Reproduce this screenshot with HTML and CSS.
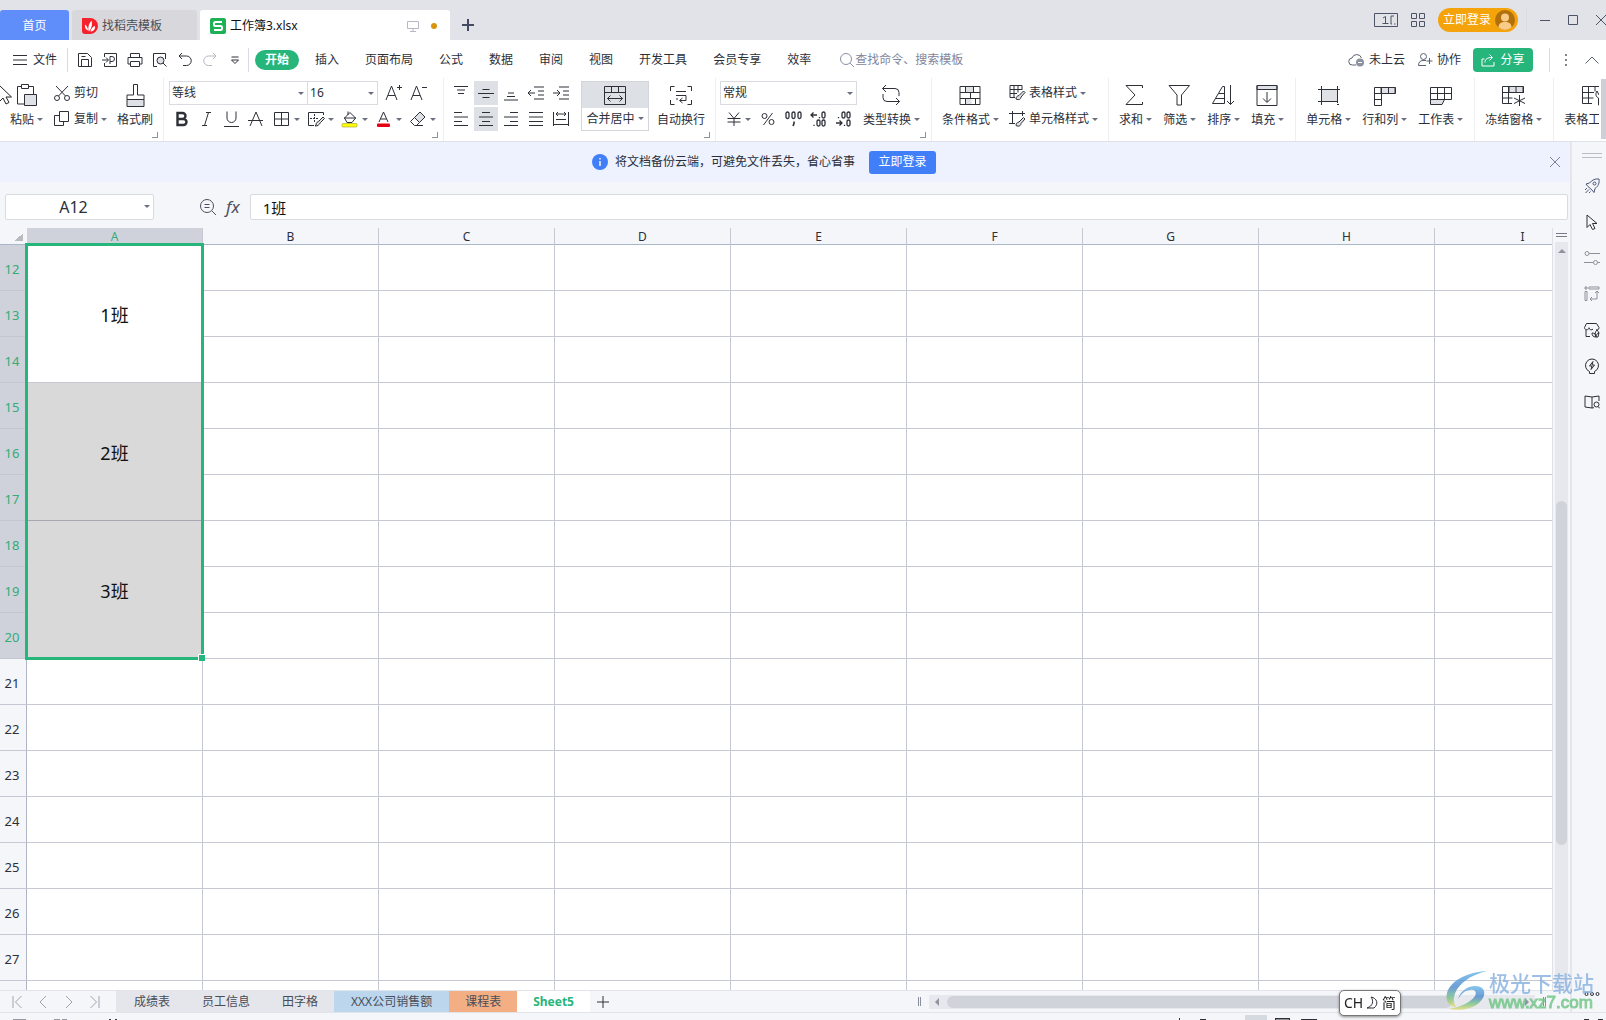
FILE: index.html
```html
<!DOCTYPE html>
<html lang="zh-CN">
<head>
<meta charset="utf-8">
<title>工作簿3.xlsx</title>
<link rel="stylesheet" href="styles.css">
</head>
<body>
<header class="titlebar">
  <button class="tab tab-home">首页</button>
  <button class="tab tab-template">
    <svg width="16" height="16" viewBox="0 0 16 16"><path d="M0 0h8a8 8 0 0 1 0 16H3a3 3 0 0 1-3-3z" fill="#f5222d"/><path d="M7 13.500C5.500 11 6.500 6 9.500 2.500c1 3.500.5 7.500-2.500 11zM6 12.500C3.500 11.500 2.500 9.500 3 6.500c2 1.500 3 3.500 3 6zM8.500 13.500c3 0 5-2.500 4.500-5.500-2.500 1-4 2.500-4.500 5.500z" fill="#fff"/></svg>
    找稻壳模板
  </button>
  <button class="tab tab-doc">
    <svg width="16" height="16" viewBox="0 0 16 16"><rect width="16" height="16" rx="2" fill="#1eb256"/><path d="M12 4H5.500Q4 4 4 5.500V6.500Q4 8 5.500 8h5Q12 8 12 9.500v1Q12 12 10.500 12H4" fill="none" stroke="#fff" stroke-width="2"/></svg>
    <span class="tab-name">工作簿3.xlsx</span>
    <svg class="ic pale" width="12" height="12" viewBox="0 0 12 12"><path d="M.5 1.500h11v7H.5zM6 8.500v3M3 11.500h6"/></svg>
    <i class="unsaved"></i>
  </button>
  <button class="new-tab" aria-label="新建标签"><svg class="ic" width="14" height="14" viewBox="0 0 14 14" stroke-width="2"><path d="M7 1v12M1 7h12"/></svg></button>
  <div class="window-tools">
    <button aria-label="窗口排列"><svg class="ic" width="24" height="14" viewBox="0 0 24 14"><path d="M.5.500h23v13H.5z"/><path d="M9 5l2.500-1.500v7M8.500 10.500h6M20 3h-3v8h1M20 11h1.500"/></svg></button>
    <button aria-label="应用"><svg class="ic" width="14" height="14" viewBox="0 0 14 14"><path d="M.5.500h5v5h-5zM8.500.500h5v5h-5zM.5 8.500h5v5h-5zM8.500 8.500h5v5h-5z"/></svg></button>
    <button class="login-pill">立即登录
      <svg width="20" height="20" viewBox="0 0 20 20"><circle cx="10" cy="10" r="10" fill="#b2700a"/><circle cx="10" cy="7.500" r="4" fill="#f8cb86"/><path d="M3.500 17.500C3.500 13.500 6 12 10 12s6.500 1.500 6.500 5.500A10 10 0 0 1 3.500 17.500z" fill="#f8cb86"/></svg>
    </button>
    <i class="rule"></i>
    <button aria-label="最小化"><svg class="ic" width="10" height="10" viewBox="0 0 10 10"><path d="M0 5.500h10"/></svg></button>
    <button aria-label="最大化"><svg class="ic" width="10" height="10" viewBox="0 0 10 10"><path d="M.5.500h9v9h-9z"/></svg></button>
    <button aria-label="关闭"><svg class="ic" width="10" height="10" viewBox="0 0 10 10"><path d="M0 0l10 10M10 0L0 10"/></svg></button>
  </div>
</header>

<nav class="menubar">
  <button class="file"><svg class="ic" width="14" height="10" viewBox="0 0 14 10"><path d="M0 .5h14M0 5h14M0 9.500h14"/></svg>文件</button>
  <i class="rule"></i>
  <div class="quick">
    <button aria-label="保存"><svg class="ic" width="16" height="16" viewBox="0 0 16 16"><path d="M1.500 1.500h9l4 4v9h-13zM4.500 14v-6.500h7V14M4.500 4.500h4"/></svg></button>
    <button aria-label="输出为PDF"><svg class="ic" width="16" height="16" viewBox="0 0 16 16"><path d="M2.500 5V1.500h12v13h-12V11M0 8h6M4 5.500L6.500 8 4 10.500M8 12V4.500h2a2 2 0 0 1 0 5H8"/></svg></button>
    <button aria-label="打印"><svg class="ic" width="16" height="16" viewBox="0 0 16 16"><path d="M3.500 5V1.500h9V5M3.500 12h-2.500V5.500h14V12h-2.500M3.500 9.500h9v5h-9z"/></svg></button>
    <button aria-label="打印预览"><svg class="ic" width="16" height="16" viewBox="0 0 16 16"><path d="M5 14.500H1.500v-13h12V7"/><circle cx="8.500" cy="8.500" r="3.500" fill="#dfe1e6"/><path d="M11 11l3.500 3.500"/></svg></button>
    <button aria-label="撤销"><svg class="ic" width="16" height="16" viewBox="0 0 16 16"><path d="M5 1L2 4l3 3M2 4h7.500a4.500 4.500 0 0 1 0 9.500H6"/></svg></button>
    <button aria-label="恢复"><svg class="ic pale" width="16" height="16" viewBox="0 0 16 16"><path d="M11 1l3 3-3 3M14 4H6.500a4.500 4.500 0 0 0 0 9.500H10"/></svg></button>
    <button aria-label="更多"><svg class="ic" width="16" height="16" viewBox="0 0 16 16"><path d="M4.500 5h7M4.500 8h7L8 11.500z"/></svg></button>
  </div>
  <i class="rule"></i>
  <div class="menus">
    <button class="current">开始</button><button>插入</button><button>页面布局</button><button>公式</button><button>数据</button><button>审阅</button><button>视图</button><button>开发工具</button><button>会员专享</button><button>效率</button>
  </div>
  <label class="search"><svg class="ic" width="16" height="16" viewBox="0 0 16 16"><circle cx="7" cy="7" r="5.500"/><path d="M11 11l4 4"/></svg><input type="text" placeholder="查找命令、搜索模板"></label>
  <div class="menu-right">
    <button><svg class="ic" width="17" height="16" viewBox="0 0 17 16"><path d="M8 13H4.500a3.500 3.500 0 0 1-.5-7A5 5 0 0 1 13.500 6"/><circle cx="12" cy="10.500" r="4" fill="#8d92a0" stroke="none"/><path d="M10 10.500h4" stroke="#fff"/></svg>未上云</button>
    <button><svg class="ic" width="16" height="16" viewBox="0 0 16 16"><circle cx="6.500" cy="4.500" r="3"/><path d="M9 13.500H1.500C1.500 10 3.500 8.500 6 8.500h3M12.500 6v6M9.500 9h6"/></svg>协作</button>
    <button class="share"><svg class="ic" width="15" height="14" viewBox="0 0 15 14"><path d="M3.500 6H1v7h12V9M4 9.500C4 6 6.500 4.500 11 4.500M8.500 1.500l3 3-3 3"/></svg>分享</button>
    <i class="rule"></i>
    <button aria-label="更多选项"><svg width="4" height="14" viewBox="0 0 4 14" fill="#555b6b"><circle cx="2" cy="2" r="1"/><circle cx="2" cy="7" r="1"/><circle cx="2" cy="12" r="1"/></svg></button>
    <button class="fold" aria-label="折叠功能区"><svg class="ic" width="14" height="8" viewBox="0 0 14 8"><path d="M.5 7.500L7 1l6.500 6.500"/></svg></button>
  </div>
</nav>

<section class="ribbon">
  <div class="group corner">
    <button class="big"><span class="pic"><svg class="ic" width="24" height="24" viewBox="0 0 24 24"><path d="M9 21H2.500V3.500H6M14 3.500h4.500V11M6.500 1.500h7v4h-7z"/><path d="M9.500 11.500h12v11h-12z" fill="#dfe1e6"/></svg></span><span>粘贴<i class="caret"></i></span></button>
    <div class="rows">
      <button class="small"><svg class="ic" width="18" height="18" viewBox="0 0 18 18"><circle cx="4" cy="14" r="2.500"/><circle cx="14" cy="14" r="2.500"/><path d="M3 2l9.500 10M15 2L5.500 12"/></svg>剪切</button>
      <button class="small"><svg class="ic" width="18" height="18" viewBox="0 0 18 18"><path d="M6.500 1.500h9v10h-9zM6.500 5.500h-5v10h9v-4"/></svg>复制<i class="caret"></i></button>
    </div>
    <button class="big"><span class="pic"><svg class="ic" width="24" height="24" viewBox="0 0 24 24"><path d="M10.500 1.500h4V12h6.500v4.500H4V12h6.500z"/><path d="M4 16.500h17v7H4z" fill="#dfe1e6"/></svg></span><span>格式刷</span></button>
  </div>

  <div class="group corner font">
    <div class="rows">
      <div class="row">
        <span class="pick pick-font"><select aria-label="字体"><option>等线</option></select></span>
        <span class="pick pick-size"><select aria-label="字号"><option>16</option></select></span>
        <button class="tool" aria-label="增大字号"><svg class="ic" width="18" height="18" viewBox="0 0 18 18"><path d="M1 16L6.500 2 12 16M3 11.500h7M14.500 1v5M12 3.500h5"/></svg></button>
        <button class="tool" aria-label="减小字号"><svg class="ic" width="18" height="18" viewBox="0 0 18 18"><path d="M1 16L6.500 2 12 16M3 11.500h7M12 3.500h5"/></svg></button>
      </div>
      <div class="row">
        <button class="tool" aria-label="加粗"><svg class="ic" width="18" height="18" viewBox="0 0 18 18" stroke-width="2.400"><path d="M4.500 3h5a3 3 0 0 1 0 6h-5zM4.500 9h6a3 3 0 0 1 0 6h-6z"/></svg></button>
        <button class="tool" aria-label="倾斜"><svg class="ic" width="18" height="18" viewBox="0 0 18 18"><path d="M8 2.500h5M4 15.500h5M10.500 2.500l-4 13"/></svg></button>
        <button class="tool" aria-label="下划线"><svg class="ic" width="18" height="18" viewBox="0 0 18 18"><path d="M4 1.500V8a4.500 4.500 0 0 0 9 0V1.500M1 16.500h15"/></svg></button>
        <button class="tool" aria-label="删除线"><svg class="ic" width="18" height="18" viewBox="0 0 18 18"><path d="M2 16L8 2l6 14M0 10.500h15"/></svg></button>
        <button class="tool drop" aria-label="边框"><svg class="ic" width="18" height="18" viewBox="0 0 18 18"><path d="M1.500 2.500h14v13h-14zM8.500 2.500v13M1.500 9h14"/></svg><i class="caret"></i></button>
        <button class="tool drop" aria-label="绘图边框"><svg class="ic" width="18" height="18" viewBox="0 0 18 18"><path d="M7 15.500H1.500v-13h15V5"/><path d="M7.500 4v8M3 8.500h8" stroke-dasharray="2 1"/><path d="M9 15c0-3 2-3 3-4l4-4 1.500 1.500-4 4C12 15 11 16 8 16z" fill="#dfe1e6"/></svg><i class="caret"></i></button>
        <button class="tool drop" aria-label="填充颜色"><svg class="ic" width="18" height="18" viewBox="0 0 18 18"><path d="M3.500 8L9 2.500 14.500 8 11 12.500H6zM3 8h12M7 5V1.500"/><rect x="1" y="13.500" width="15" height="3.500" rx="1" fill="#ffff00" stroke="#a39b32" stroke-width=".6"/></svg><i class="caret"></i></button>
        <button class="tool drop" aria-label="字体颜色"><svg class="ic" width="18" height="18" viewBox="0 0 18 18"><path d="M4 12L8.500 2l4.500 10M5.500 9h6"/><rect x="2" y="13.500" width="13" height="3.500" rx="1" fill="#e60012" stroke="none"/></svg><i class="caret"></i></button>
        <button class="tool drop" aria-label="清除"><svg class="ic" width="18" height="18" viewBox="0 0 18 18"><path d="M5.500 7.500L11 2l5 5-5.500 5.500z" fill="#dfe1e6"/><path d="M5.500 7.500L1.500 11.500 5.500 15.500h2l3-3M7 15.500h7"/></svg><i class="caret"></i></button>
      </div>
    </div>
  </div>

  <div class="group corner align">
    <div class="rows">
      <div class="row">
        <button class="tool" aria-label="顶端对齐"><svg class="ic" width="16" height="16" viewBox="0 0 16 16"><path d="M1 1.500h14M4 5h8M5 8.500h6"/></svg></button>
        <button class="tool on" aria-label="垂直居中"><svg class="ic" width="16" height="16" viewBox="0 0 16 16"><path d="M4.500 4.500h7M0 8.500h16M4.500 12.500h7"/></svg></button>
        <button class="tool" aria-label="底端对齐"><svg class="ic" width="16" height="16" viewBox="0 0 16 16"><path d="M5 8h6M4 11.500h8M1 15h14"/></svg></button>
        <button class="tool" aria-label="减少缩进"><svg class="ic" width="16" height="16" viewBox="0 0 16 16"><path d="M6 2h10M10 6h6M10 10h6M6 14h10M0 8h7M3 5L0 8l3 3"/></svg></button>
        <button class="tool" aria-label="增加缩进"><svg class="ic" width="16" height="16" viewBox="0 0 16 16"><path d="M6 2h10M10 6h6M10 10h6M6 14h10M0 8h7M4 5l3 3-3 3"/></svg></button>
      </div>
      <div class="row">
        <button class="tool" aria-label="左对齐"><svg class="ic" width="16" height="16" viewBox="0 0 16 16"><path d="M1 1.500h8M1 6h14M1 10.500h8M1 14.500h14"/></svg></button>
        <button class="tool on" aria-label="水平居中"><svg class="ic" width="16" height="16" viewBox="0 0 16 16"><path d="M4 1.500h8M1 6h14M4 10.500h8M1 14.500h14"/></svg></button>
        <button class="tool" aria-label="右对齐"><svg class="ic" width="16" height="16" viewBox="0 0 16 16"><path d="M7 1.500h8M1 6h14M7 10.500h8M1 14.500h14"/></svg></button>
        <button class="tool" aria-label="两端对齐"><svg class="ic" width="16" height="16" viewBox="0 0 16 16"><path d="M1 1.500h14M1 6h14M1 10.500h14M1 14.500h14"/></svg></button>
        <button class="tool" aria-label="分散对齐"><svg class="ic" width="16" height="16" viewBox="0 0 16 16"><path d="M.5 1v14M15.500 1v14M3 3h10M5 1L3 3l2 2M11 1l2 2-2 2M3 8.500h10M.5 13.500h15"/></svg></button>
      </div>
    </div>
    <button class="big merge"><span class="pic"><svg class="ic" width="24" height="24" viewBox="0 0 24 24"><path d="M1.500 3.500h21v18h-21zM1.500 9.500h21M8.500 3.500v6M15.500 3.500v6M4.500 15.500h15M7.500 12.500l-3 3 3 3M16.500 12.500l3 3-3 3"/></svg></span><span>合并居中<i class="caret"></i></span></button>
    <button class="big"><span class="pic"><svg class="ic" width="24" height="24" viewBox="0 0 24 24"><path d="M1.500 8V3.500h4M18.500 3.500h4V8M1.500 17v4.500h4M18.500 21.500h4V17M7 8.500h10M7 12.500h10v5h-6M13.500 15l-3 2.500 3 2.500M7 16h2"/></svg></span><span>自动换行</span></button>
  </div>

  <div class="group corner number">
    <div class="rows">
      <span class="pick pick-format"><select aria-label="数字格式"><option>常规</option></select></span>
      <div class="row">
        <button class="tool money" aria-label="货币"><svg class="ic" width="16" height="16" viewBox="0 0 16 16"><path d="M3 1.500l5 6 5-6M8 7.500V15M1.500 7.500h13M1.500 11h13"/></svg><i class="caret"></i></button>
        <button class="tool" aria-label="百分比"><svg class="ic" width="16" height="16" viewBox="0 0 16 16"><circle cx="3.500" cy="5" r="2.500"/><circle cx="10.500" cy="11" r="2.500"/><path d="M11.500 2l-9 12"/></svg></button>
        <button class="tool" aria-label="千位分隔"><svg class="ic" width="18" height="16" viewBox="0 0 18 16" ><g stroke-width="1.300"><rect x="1" y="1" width="3" height="6.500" rx="1.500"/><rect x="7" y="1" width="3" height="6.500" rx="1.500"/><rect x="13" y="1" width="3" height="6.500" rx="1.500"/><path d="M9 10.500v2l-1 2.500" stroke-width="1.600"/></g></svg></button>
        <button class="tool" aria-label="增加小数位"><svg class="ic" width="18" height="16" viewBox="0 0 18 16"><g stroke-width="1.300"><path d="M1 4h6M3.500 1.500L1 4l2.500 2.500M9.500 6v1.300M4 13.700V15"/><rect x="12" y="1" width="3" height="6" rx="1.500"/><rect x="7" y="9" width="3" height="6" rx="1.500"/><rect x="12" y="9" width="3" height="6" rx="1.500"/></g></svg></button>
        <button class="tool" aria-label="减少小数位"><svg class="ic" width="18" height="16" viewBox="0 0 18 16"><g stroke-width="1.300"><path d="M1 12h6M4.500 9.500L7 12l-2.500 2.500M9.500 13.700V15M3.500 6v1.300"/><rect x="7" y="1" width="3" height="6" rx="1.500"/><rect x="12" y="1" width="3" height="6" rx="1.500"/><rect x="12" y="9" width="3" height="6" rx="1.500"/></g></svg></button>
      </div>
    </div>
    <button class="big"><span class="pic"><svg class="ic" width="24" height="24" viewBox="0 0 24 24"><path d="M6 2L2.500 5.500 6 9M2.500 5.500H15a4 4 0 0 1 4 4V13M16 15l3.500 3.500L16 22M19.500 18.500H7a4 4 0 0 1-4-4V11"/></svg></span><span>类型转换<i class="caret"></i></span></button>
  </div>

  <div class="group styles">
    <button class="big"><span class="pic"><svg class="ic" width="24" height="24" viewBox="0 0 24 24"><path d="M6.500 3.500h8v6h-8zM6.500 15.500h6v6h-6z" fill="#dfe1e6" stroke="none"/><path d="M1 3.500h20v18H1zM1 9.500h20M1 15.500h20M6.500 3.500v6M14.500 3.500v6M11.500 9.500v6M6.500 15.500v6M16.500 15.500v6"/></svg></span><span>条件格式<i class="caret"></i></span></button>
    <div class="rows">
      <button class="small"><svg class="ic" width="18" height="18" viewBox="0 0 18 18"><path d="M7 13.500H2v-12h12V6M2 5.500h12M2 9.500h7M6 1.500v12M10 1.500v7"/><path d="M8 15c0-2 1-3 3-3.500L15.500 7 17 8.500 13 13c0 2-2 3.500-5 2z" fill="#dfe1e6"/></svg>表格样式<i class="caret"></i></button>
      <button class="small"><svg class="ic" width="18" height="18" viewBox="0 0 18 18"><path d="M4.500 1v13M1 3.500h16M14.500 1v5M1 13.500h6"/><path d="M8 15.500c0-2 1-3 3-3.500L15.500 7.500 17 9l-4 4.500c0 2-2 3.500-5 2z" fill="#dfe1e6"/></svg>单元格样式<i class="caret"></i></button>
    </div>
  </div>

  <div class="group">
    <button class="big"><span class="pic"><svg class="ic" width="24" height="24" viewBox="0 0 24 24"><path d="M18.500 5V2.500H2L11 12 2 21.500h16.500V19"/></svg></span><span>求和<i class="caret"></i></span></button>
    <button class="big"><span class="pic"><svg class="ic" width="24" height="24" viewBox="0 0 24 24"><path d="M1 2.500h20.500L13.500 12v10h-4.500V12z"/></svg></span><span>筛选<i class="caret"></i></span></button>
    <button class="big"><span class="pic"><svg class="ic" width="24" height="24" viewBox="0 0 24 24"><path d="M.5 20.500l10-17h2v17zM7 10.500h5.500M3.500 15.500h9M18.500 2v19.500M15 18l3.500 3.500L22 18"/></svg></span><span>排序<i class="caret"></i></span></button>
    <button class="big"><span class="pic"><svg class="ic" width="24" height="24" viewBox="0 0 24 24"><path d="M1 2.500h20v4H1z" fill="#dfe1e6"/><path d="M1 2.500h20v20H1zM11 9v10M7 15.500l4 4 4-4"/></svg></span><span>填充<i class="caret"></i></span></button>
  </div>

  <div class="group">
    <button class="big"><span class="pic"><svg class="ic" width="24" height="24" viewBox="0 0 24 24"><path d="M4.500 6.500h16v12h-16z" fill="#dfe1e6"/><path d="M4.500 3v19M20.500 3v17M1 6.500h22M1 18.500h18M20 21.500h2"/></svg></span><span>单元格<i class="caret"></i></span></button>
    <button class="big"><span class="pic"><svg class="ic" width="24" height="24" viewBox="0 0 24 24"><path d="M8 4.500h14v6H8z" fill="#dfe1e6"/><path d="M1.500 4.500h21v6h-14v12h-7zM8.500 4.500v6M15.500 4.500v6M1.500 10.500h7M1.500 16.500h7"/></svg></span><span>行和列<i class="caret"></i></span></button>
    <button class="big"><span class="pic"><svg class="ic" width="24" height="24" viewBox="0 0 24 24"><path d="M1.500 16.500h14l-2.500 5H1.500z" fill="#dfe1e6"/><path d="M1.500 4.500h21v12h-21zM1.500 10.500h21M8.500 4.500v12M15.500 4.500v12"/></svg></span><span>工作表<i class="caret"></i></span></button>
  </div>

  <div class="group">
    <button class="big"><span class="pic"><svg class="ic" width="24" height="24" viewBox="0 0 24 24"><path d="M7 3.500h14v6H7z" fill="#dfe1e6"/><path d="M10 20.500H.5v-17h21V10M.5 9.500h21M.5 15h10M6.500 3.500v17M14 3.500v6M17.500 12v11M12 15l11 5.500M23 15l-11 5.500"/></svg></span><span>冻结窗格<i class="caret"></i></span></button>
  </div>

  <div class="group last">
    <button class="big"><span class="pic"><svg class="ic" width="24" height="24" viewBox="0 0 24 24"><path d="M11 20.500H1.500v-17H21M1.500 9.500H13M1.500 15h11M7.500 3.500v17M14 3.500v5M16 8c-2 3-1 6 1.500 7v7h3v-7C23 14 24 11 22 8v4h-4z"/></svg></span><span>表格工具<i class="caret"></i></span></button>
  </div>
  <div class="ribbon-scroll"></div>
</section>

<div class="workspace">
  <main class="book">
    <div class="banner">
      <svg width="16" height="16" viewBox="0 0 16 16"><circle cx="8" cy="8" r="8" fill="#417ff9"/><path d="M8 7v5M8 4v1.500" stroke="#fff" stroke-width="1.400"/></svg>
      <span>将文档备份云端，可避免文件丢失，省心省事</span>
      <button class="login">立即登录</button>
      <button class="dismiss" aria-label="关闭"><svg class="ic" width="12" height="12" viewBox="0 0 12 12"><path d="M1 1l10 10M11 1L1 11"/></svg></button>
    </div>

    <div class="formula">
      <span class="pick namebox"><input type="text" aria-label="名称框" value="A12"></span>
      <div class="formula-tools">
        <button aria-label="查看公式"><svg class="ic" width="18" height="18" viewBox="0 0 18 18"><circle cx="8" cy="8" r="6.500"/><path d="M13 13l4 4M5.500 6.500h5M5.500 9.500h5"/></svg></button>
        <button class="fx" aria-label="插入函数">fx</button>
      </div>
      <input class="formula-input" type="text" aria-label="编辑栏" value="1班">
    </div>

    <div class="sheet-area">
      <div class="sheet">
        <table class="grid">
          <colgroup><col class="col-num"><col><col><col><col><col><col><col><col><col></colgroup>
          <thead><tr><th class="all"></th><th class="sel">A</th><th>B</th><th>C</th><th>D</th><th>E</th><th>F</th><th>G</th><th>H</th><th>I</th></tr></thead>
          <tbody>
            <tr><th class="sel">12</th><td rowspan="3">1班</td><td></td><td></td><td></td><td></td><td></td><td></td><td></td><td></td></tr>
            <tr><th class="sel">13</th><td></td><td></td><td></td><td></td><td></td><td></td><td></td><td></td></tr>
            <tr><th class="sel">14</th><td></td><td></td><td></td><td></td><td></td><td></td><td></td><td></td></tr>
            <tr><th class="sel">15</th><td rowspan="3" class="shade">2班</td><td></td><td></td><td></td><td></td><td></td><td></td><td></td><td></td></tr>
            <tr><th class="sel">16</th><td></td><td></td><td></td><td></td><td></td><td></td><td></td><td></td></tr>
            <tr><th class="sel">17</th><td></td><td></td><td></td><td></td><td></td><td></td><td></td><td></td></tr>
            <tr><th class="sel">18</th><td rowspan="3" class="shade">3班</td><td></td><td></td><td></td><td></td><td></td><td></td><td></td><td></td></tr>
            <tr><th class="sel">19</th><td></td><td></td><td></td><td></td><td></td><td></td><td></td><td></td></tr>
            <tr><th class="sel">20</th><td></td><td></td><td></td><td></td><td></td><td></td><td></td><td></td></tr>
            <tr><th>21</th><td></td><td></td><td></td><td></td><td></td><td></td><td></td><td></td><td></td></tr>
            <tr><th>22</th><td></td><td></td><td></td><td></td><td></td><td></td><td></td><td></td><td></td></tr>
            <tr><th>23</th><td></td><td></td><td></td><td></td><td></td><td></td><td></td><td></td><td></td></tr>
            <tr><th>24</th><td></td><td></td><td></td><td></td><td></td><td></td><td></td><td></td><td></td></tr>
            <tr><th>25</th><td></td><td></td><td></td><td></td><td></td><td></td><td></td><td></td><td></td></tr>
            <tr><th>26</th><td></td><td></td><td></td><td></td><td></td><td></td><td></td><td></td><td></td></tr>
            <tr><th>27</th><td></td><td></td><td></td><td></td><td></td><td></td><td></td><td></td><td></td></tr>
            <tr><th></th><td></td><td></td><td></td><td></td><td></td><td></td><td></td><td></td><td></td></tr>
          </tbody>
        </table>
        <div class="selection"></div>
      </div>
      <div class="vscroll">
        <i class="split"></i>
        <div class="vtrack"><i class="up"></i><i class="vthumb"></i></div>
      </div>
    </div>

    <div class="sheetbar">
      <div class="sheet-nav">
        <button aria-label="第一张"><svg class="ic" width="12" height="14" viewBox="0 0 12 14"><path d="M2 1v12M10.500 1l-6 6 6 6"/></svg></button>
        <button aria-label="上一张"><svg class="ic" width="12" height="14" viewBox="0 0 12 14"><path d="M9 1L3 7l6 6"/></svg></button>
        <button aria-label="下一张"><svg class="ic" width="12" height="14" viewBox="0 0 12 14"><path d="M3 1l6 6-6 6"/></svg></button>
        <button aria-label="最后一张"><svg class="ic" width="12" height="14" viewBox="0 0 12 14"><path d="M1.500 1l6 6-6 6M10 1v12"/></svg></button>
      </div>
      <div class="sheets">
        <button>成绩表</button><button>员工信息</button><button>田字格</button><button class="blue">XXX公司销售额</button><button class="orange">课程表</button><button class="active">Sheet5</button>
      </div>
      <button class="add-sheet" aria-label="新建工作表"><svg class="ic" width="14" height="14" viewBox="0 0 14 14"><path d="M7 1v12M1 7h12"/></svg></button>
      <div class="hscroll"><i class="grip"></i><div class="htrack"><i class="left"></i><i class="hthumb"></i><i class="right"></i></div><i class="grip"></i></div>
    </div>
  </main>

  <aside class="side">
    <i class="handle"></i>
    <button aria-label="快捷"><svg class="ic" width="16" height="16" viewBox="0 0 16 16" stroke="#4a5578"><path d="M15 1c-4-.5-7 1-9.500 4L2 6l2 2.500L8 12l2 2.500 1-4C14.500 8 15.500 5 15 1zM3 10l-2 2M5 11.500L1.500 15M6.500 13.500L5 15"/><circle cx="10.500" cy="5.500" r="1.500"/></svg></button>
    <button aria-label="选择"><svg class="ic" width="16" height="16" viewBox="0 0 16 16"><path d="M3 1v12.500l3-3 2.500 5 2.500-1-2.500-5h4.500z"/></svg></button>
    <button aria-label="属性"><svg class="ic gray" width="16" height="16" viewBox="0 0 16 16"><circle cx="3" cy="3.500" r="2"/><circle cx="11.500" cy="12.500" r="2"/><path d="M5 3.500h11M0 12.500h9.500M13.500 12.500H16"/></svg></button>
    <button aria-label="行列"><svg class="ic gray" width="16" height="16" viewBox="0 0 16 16"><path d="M1 1h2v2H1zM5 1h10v2H5zM1 5.500h2v9H1zM13 5v8H6M11 7l2-2 2 2M8 11l-2 2 2 2"/></svg></button>
    <button aria-label="备份"><svg class="ic" width="16" height="16" viewBox="0 0 16 16"><path d="M6 14.500H2V8M.5 5.500l2-4h10l2.500 4c0 2.500-2 3-3 2M.5 5.500c0 3 4.500 3 4.500 0M5 6c.5 2 3 2.500 4 1"/><path d="M8 11c3 0 4 1.500 4 4-3 0-4-1.500-4-4zM12 15c-1.500-3-1-5 1-7 2 2 2 4 1 7zM12 15c0-2 1-4 3.500-4"/></svg></button>
    <button aria-label="灵感"><svg class="ic" width="16" height="16" viewBox="0 0 16 16"><path d="M5.500 13.500a6.500 6.500 0 1 1 5 0M5.500 13.500v2h5v-2M9 3.500L5.500 8H8l-1 3.500L10.500 7H8z"/></svg></button>
    <button aria-label="查阅"><svg class="ic" width="16" height="16" viewBox="0 0 16 16"><path d="M8 3v11M8 3L1 2v11l7 1M8 3l7-1v5M8 14l2-.3"/><circle cx="12.500" cy="10.500" r="2.500"/><path d="M14 12.500l2 2"/></svg></button>
    <button class="more" aria-label="更多"><svg class="ic" width="16" height="6" viewBox="0 0 16 6"><circle cx="2.500" cy="3" r="1.500"/><circle cx="8" cy="3" r="1.500"/><circle cx="13.500" cy="3" r="1.500"/></svg></button>
  </aside>
</div>

<footer class="status">
  <svg width="120" height="8" viewBox="0 0 120 8" fill="#3b3f4a"><path d="M13 6.500h13V8H13zM54 6.500h6V8h-6zM62 6.500h5V8h-5zM109 6h2v2h-2zM115 6h2v2h-2z"/></svg>
  <svg width="430" height="8" viewBox="0 0 430 8" fill="#2e3038"><path d="M69 2h22v6H69z" fill="#d5d9e0"/><path d="M3 5h1v3H3zM24 6h6v2h-6zM99 5h15v3h-1V6.500h-13V8h-1zM125 6h16v2h-16zM408 6h5v2h-5zM422 6h5v2h-5z"/></svg>
</footer>

<svg class="pointer" width="14" height="22" viewBox="0 0 14 22"><path d="M-1 1v17l4-4 3 6 3-1.500-3-5.500h5.500z" fill="#fff" stroke="#222"/></svg>
<div class="ime">CH <svg class="ic" width="13" height="14" viewBox="0 0 13 14"><path d="M5 1c6 1 8 7 3 11H1C7 10 8 5 5 1z"/></svg> 简</div>
<div class="watermark">
  <svg width="42" height="40" viewBox="0 0 42 40">
    <defs><linearGradient id="wave" x1="0" y1="0" x2="0" y2="1"><stop offset="0" stop-color="#65b9e8"/><stop offset=".45" stop-color="#4b86cd"/><stop offset=".75" stop-color="#7cc486"/><stop offset="1" stop-color="#e8dc70"/></linearGradient></defs>
    <path d="M41 0C22 1 5 9 1 22c-2 8 2 13 9 14C5 29 9 17 19 10 25 5 33 2 41 0z" fill="url(#wave)"/>
    <path d="M12 28c2-7 9-13 17-13 9 0 11 6 8 12C32 36 18 41 3 38c12-2 22-7 26-13 2-4 0-7-5-6-5 0-9 4-12 9z" fill="url(#wave)"/>
  </svg>
  <div><b>极光下载站</b><span>www.xz7.com</span></div>
</div>
</body>
</html>
```
FILE: styles.css
```css
* { box-sizing: border-box; }

body {
  margin: 0;
  height: 100vh;
  display: flex;
  flex-direction: column;
  overflow: hidden;
  background: #f5f6f9;
  color: #2b2f3a;
  font: 12px/18px "Noto Sans", "Noto Sans CJK SC", sans-serif;
}

button, input, select {
  margin: 0;
  padding: 0;
  border: 0;
  background: none;
  color: inherit;
  font: inherit;
}

button {
  display: flex;
  flex: none;
  align-items: center;
  justify-content: center;
  white-space: nowrap;
}

svg { display: block; flex: none; }
.ic { fill: none; stroke: #2e3038; }
.ic[stroke] { stroke: #4a5578; }
.ic.pale { stroke: #b4b8c2; }
.ic.gray { stroke: #8d919b; }

.rule { width: 1px; height: 24px; background: #d9dbe0; flex: none; }

.caret {
  display: inline-block;
  flex: none;
  border: 3px solid transparent;
  border-top-color: #6b7080;
  border-bottom: 0;
  margin-left: 3px;
  vertical-align: 3px;
}

/* title bar */
.titlebar {
  height: 40px;
  flex: none;
  display: flex;
  align-items: flex-end;
  gap: 3px;
  background: #e2e3e8;
}
.tab { height: 30px; padding-top: 2px; border-radius: 3px 3px 0 0; }
.tab-home { width: 69px; background: #5f8dfa; color: #fff; }
.tab-template { width: 125px; justify-content: flex-start; gap: 4px; padding-left: 10px; background: #d8d8dc; color: #4a4e58; }
.tab-doc { width: 250px; justify-content: flex-start; gap: 4px; padding-left: 10px; padding-right: 13px; background: #fff; color: #111; }
.tab-name { flex: 1; text-align: left; }
.unsaved { width: 6px; height: 6px; margin-left: 8px; border-radius: 50%; background: #d8950c; }
.new-tab { width: 30px; height: 30px; }
.new-tab .ic { stroke: #434b62; }
.window-tools { display: flex; align-items: center; gap: 13px; height: 40px; margin-left: auto; }
.window-tools .ic { stroke: #4d5468; }
.window-tools .rule { margin-left: -5px; }
.window-tools button:nth-last-child(-n+2) { margin-left: 5px; }
.login-pill { width: 80px; height: 24px; gap: 4px; padding-left: 2px; border-radius: 12px; background: #f5a30b; color: #fff; }

/* menu row */
.menubar { height: 38px; flex: none; display: flex; align-items: center; padding: 2px 7px 0 13px; background: #fff; }
.file { gap: 6px; padding-right: 10px; }
.quick { display: flex; gap: 9px; padding: 0 5px 0 9px; }
.menus { display: flex; gap: 26px; padding-left: 6px; }
.menus .current { width: 44px; height: 20px; margin-right: -10px; border-radius: 10px; background: #26b57b; color: #fff; font-weight: 700; }
.search { display: flex; align-items: center; flex: 1; padding-left: 28px; }
.search .ic { stroke: #8a90a8; }
.search input { width: 120px; outline: 0; }
.search input::placeholder { color: #7f869c; opacity: 1; }
.menu-right { display: flex; align-items: center; gap: 12px; }
.menu-right button { gap: 4px; }
.menu-right .ic { stroke: #5b6172; }
.menu-right .share { width: 60px; height: 24px; border-radius: 4px; background: #26b57b; color: #fff; }
.menu-right .share .ic { stroke: #fff; }
.menu-right .rule { margin: 0 2px 0 4px; }
.menu-right .fold { margin-left: 5px; }

/* ribbon */
.ribbon {
  height: 64px;
  flex: none;
  display: flex;
  position: relative;
  overflow: hidden;
  background: #fff;
  border-bottom: 1px solid #dfe2e9;
}
.group {
  position: relative;
  flex: none;
  display: flex;
  align-items: flex-start;
  gap: 11px;
  padding: 3px 11px 0 10px;
  border-right: 1px solid #eeeff2;
}
.group:first-child { gap: 10px; padding-right: 10px; }
.group.corner::after {
  content: "";
  position: absolute;
  right: 5px;
  bottom: 3px;
  width: 5px;
  height: 5px;
  border: solid #8d919b;
  border-width: 0 1px 1px 0;
}
.group.last { border: 0; padding-right: 0; }
.group.font { padding-left: 5px; padding-right: 4px; }
.group.align { gap: 8px; padding-left: 5px; padding-right: 10px; }
.group.number { gap: 6px; padding-left: 4px; }
.group.styles { gap: 9px; padding-right: 10px; }

.big { flex-direction: column; height: 50px; line-height: 22px; }
.pic { width: 100%; height: 28px; display: flex; align-items: center; justify-content: center; }
.merge { width: 68px; border: 1px solid #d2d6db; background: #fff; }
.merge .pic { background: #dde1e6; }
.rows { display: flex; flex-direction: column; gap: 2px; }
.small { height: 24px; gap: 3px; justify-content: flex-start; }
.small .caret { margin-left: 0; }
.row { display: flex; }
.tool { width: 25px; height: 24px; }
.drop { width: 34px; }
.align .row { gap: 1px; }
.align .tool { width: 24px; }
.on { background: #dde1e6; }
.money { width: 36px; }

.pick { position: relative; display: block; flex: none; height: 24px; border: 1px solid #d9dbe0; background: #fff; }
.pick::after {
  content: "";
  position: absolute;
  right: 3px;
  top: 10px;
  border: 3px solid transparent;
  border-top-color: #6b7080;
  border-bottom: 0;
}
.pick select { width: 100%; height: 100%; padding-left: 2px; appearance: none; }
.pick-font { width: 139px; }
.pick-size { width: 71px; margin: 0 3px 0 -1px; }
.pick-format { width: 137px; }

.ribbon-scroll { position: absolute; right: 0; top: 1px; bottom: 2px; width: 7px; background: #cdcfd6; border-left: 2px solid #fff; }

/* workspace */
.workspace { flex: 1; min-height: 0; display: flex; }
.book { flex: 1; min-width: 0; display: flex; flex-direction: column; }

.banner { height: 40px; flex: none; display: flex; align-items: center; justify-content: center; gap: 7px; padding-right: 42px; position: relative; background: #edf2fe; }
.login { width: 67px; height: 23px; margin-left: 7px; border-radius: 3px; background: #417ff9; color: #fff; }
.dismiss { position: absolute; right: 5px; top: 10px; width: 20px; height: 20px; }
.dismiss .ic { stroke: #7b8296; }

.formula { height: 46px; flex: none; display: flex; align-items: center; padding: 4px 2px 0 5px; }
.namebox { width: 149px; height: 26px; border-radius: 2px; }
.namebox input { width: 100%; height: 100%; padding-right: 12px; text-align: center; font-size: 16px; }
.formula-tools { display: flex; align-items: center; gap: 9px; padding: 0 10px 0 45px; }
.formula-tools .ic { stroke: #4b5060; }
.fx { font: italic 17px/20px "Noto Sans", sans-serif; color: #4b5060; }
.formula-input { flex: 1; min-width: 0; height: 26px; padding: 0 12px; border: 1px solid #d9dbe0; border-radius: 2px; background: #fff; font-size: 15px; color: #111; }

.sheet-area { flex: 1; min-height: 0; display: flex; }
.sheet { flex: 1; min-width: 0; position: relative; overflow: hidden; background: #fff; border-right: 1px solid #dfe1e8; }
.grid { width: 1611px; table-layout: fixed; border-collapse: separate; border-spacing: 0; }
.grid col { width: 176px; }
.grid .col-num { width: 27px; }
.grid th, .grid td { padding: 2px 0 0; border: solid #c6c8d4; border-width: 0 1px 1px 0; }
.grid th { background: #f5f6f9; font-weight: 400; }
.grid thead th { height: 17px; line-height: 14px; border-bottom-color: #a9b8c8; }
.grid tbody th, .grid td { height: 46px; }
.grid tbody th { padding-right: 2px; border-right-color: #b0b5c2; font-size: 13px; }
.grid td { text-align: center; font-size: 18px; color: #111; }
.grid .sel { background: #cfd2da; color: #33ac78; }
.grid tbody th.sel { border-bottom-color: #c3c7d0; }
.grid .shade { background: #d9d9d9; border-bottom-color: #a8a8b4; }
.grid .all { background: linear-gradient(135deg, transparent 50%, #b9bbc1 50%) 15px 5px / 8px 8px no-repeat #f5f6f9; border-right-color: #f5f6f9; }
.selection { position: absolute; left: 25px; top: 15px; width: 179px; height: 417px; border: 3px solid #26b57b; }
.selection::after { content: ""; position: absolute; right: -4px; bottom: -4px; width: 6px; height: 6px; background: #26b57b; border: 1px solid #fff; border-width: 1px 0 0 1px; }

.vscroll { width: 17px; flex: none; display: flex; flex-direction: column; padding: 0 2px; }
.split { height: 4px; margin: 5px 1px; border: solid #777c88; border-width: 1px 0; }
.vtrack { flex: 1; display: flex; flex-direction: column; align-items: center; background: #e7e8ee; }
.up { margin-top: 7px; border: 4px solid transparent; border-top: 0; border-bottom-color: #8f949f; }
.vthumb { width: 11px; height: 46%; margin-top: 248px; border-radius: 6px; background: #d0d3da; }

.sheetbar { height: 22px; flex: none; display: flex; align-items: stretch; border-top: 1px solid #e2e4e9; }
.sheet-nav { width: 116px; display: flex; gap: 14px; padding-left: 11px; }
.sheet-nav .ic { stroke: #a0a4ae; }
.sheets { display: flex; padding-left: 2px; background: #e5e6eb; color: #484d58; }
.sheets button { padding: 0 16px; }
.sheets .blue { padding: 0 17px; background: #bcd6ee; }
.sheets .orange { background: #f3ae84; }
.sheets .active { background: #fff; color: #26b57b; font-weight: 700; }
.add-sheet { width: 26px; }
.hscroll { width: 42%; margin-left: auto; display: flex; align-items: center; gap: 8px; padding: 0 24px 0 7px; }
.grip { width: 3px; height: 9px; border: solid #8b909c; border-width: 0 1px; }
.htrack { flex: 1; height: 14px; display: flex; align-items: center; gap: 8px; padding: 0 6px; background: #e7e8ee; }
.left, .right { border: 4px solid transparent; border-left: 0; border-right-color: #8f949f; }
.right { border: 4px solid transparent; border-right: 0; border-left-color: #8f949f; margin-left: auto; }
.hthumb { width: 85%; height: 12px; border-radius: 6px; background: #d0d3da; }

.side { width: 36px; flex: none; display: flex; flex-direction: column; align-items: center; gap: 20px; padding: 11px 0 15px 6px; border-left: 2px solid #e4e6ec; }
.handle { width: 20px; height: 5px; border: solid #b9bcc4; border-width: 1px 0; }
.more { margin-top: auto; }

.status { height: 8px; flex: none; display: flex; justify-content: space-between; overflow: hidden; border-top: 1px solid #e2e4e9; }

/* floating items */
.pointer { position: fixed; left: 0; top: 84px; }
.ime { position: fixed; right: 205px; bottom: 4px; height: 26px; width: 62px; display: flex; align-items: center; justify-content: center; gap: 3px; border: 1px solid #777; border-radius: 5px; background: #fff; box-shadow: 0 1px 3px #888; font-size: 14px; color: #222; }
.watermark { position: fixed; right: 12px; bottom: 8px; display: flex; align-items: center; gap: 1px; opacity: .8; }
.watermark div { display: flex; flex-direction: column; }
.watermark b { font: 500 21px/24px "Noto Sans CJK SC", sans-serif; color: #86b0df; }
.watermark span { font: 17px/18px "Liberation Sans", sans-serif; -webkit-text-stroke: 1px #6cc482; color: #6cc482; }
```
